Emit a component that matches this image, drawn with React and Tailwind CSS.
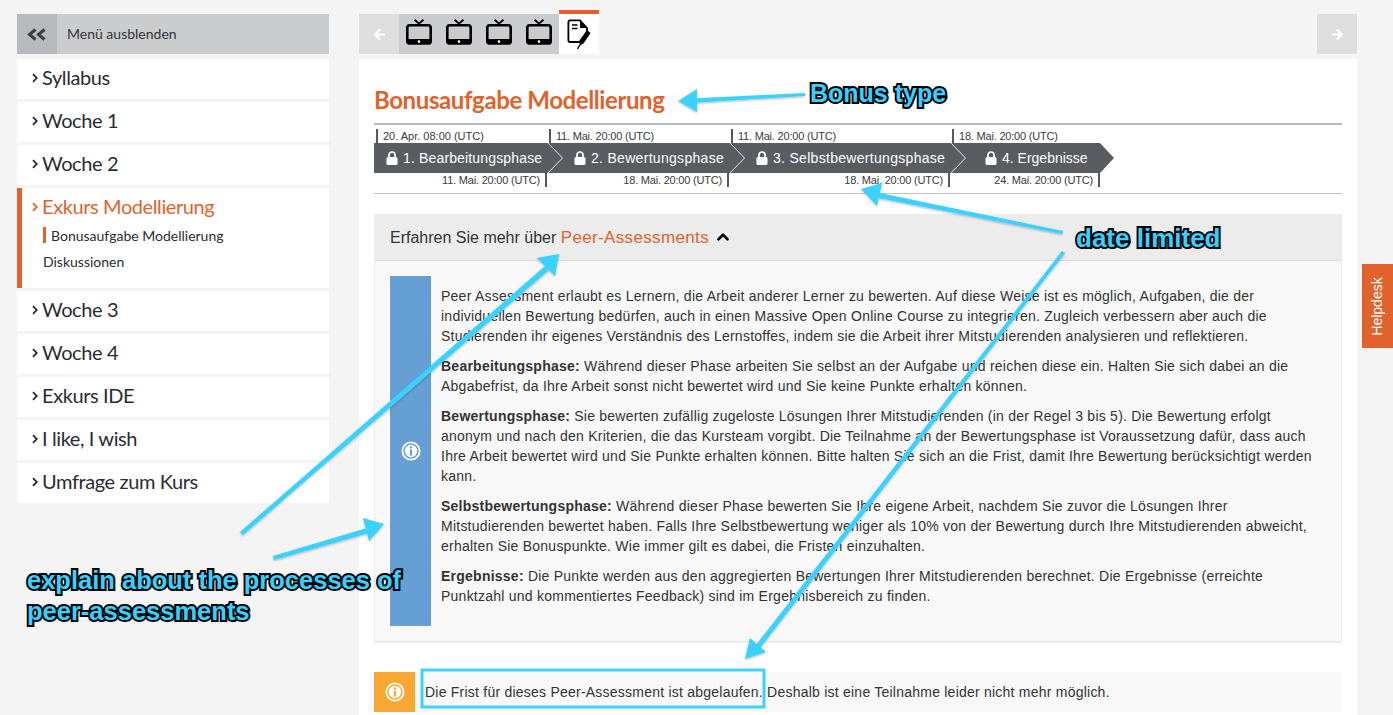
import React from "react";
import { ArrowLeft, ArrowRight, ChevronUp } from "lucide-react";

const SANS = "font-['Liberation_Sans',Arial,sans-serif]";
const KLAV = "font-['Lato','Noto_Sans',sans-serif]";

function Chev({ className = "" }) {
  return (
    <svg width="6" height="10" viewBox="0 0 6 10" className={className} fill="none" stroke="currentColor" strokeWidth="1.8">
      <path d="M1 1.2 L4.8 5 L1 8.8" />
    </svg>
  );
}

function NavItem({ label }) {
  return (
    <div className={`h-10 bg-white flex items-center pl-[15px] pb-[4px] text-[#2b2b33] ${KLAV}`}>
      <Chev className="mr-[4px] mt-[2px]" />
      <span className="text-[20px] tracking-[-0.4px]">{label}</span>
    </div>
  );
}

function Tv() {
  return (
    <div className="w-10 h-10 flex items-center justify-center">
      <svg width="26" height="26" viewBox="0 0 26 26" fill="none" className="-mt-[4px]">
        <path d="M8.5 0.7 L13 4.6 L17.5 0.7" stroke="#000" strokeWidth="1.8" />
        <rect x="1.3" y="6.3" width="23.4" height="18" rx="2.5" fill="#cbcccd" stroke="#000" strokeWidth="2.6" />
        <rect x="0.5" y="20" width="25" height="5.5" rx="1.8" fill="#000" />
        <circle cx="13" cy="22.6" r="1.3" fill="#fff" />
      </svg>
    </div>
  );
}

function NoteIcon() {
  return (
    <svg width="24" height="32" viewBox="0 0 24 32" fill="none">
      <path d="M13 23 H3 a1.6 1.6 0 0 1 -1.6 -1.6 V3 a1.6 1.6 0 0 1 1.6 -1.6 H13 L20 9 V12" stroke="#000" strokeWidth="1.8" />
      <path d="M13 1.5 L20 9 H13 Z" fill="#000" />
      <path d="M5 6 H10.5 M5 9.5 H10.5" stroke="#000" strokeWidth="1.3" />
      <path d="M20 11 L23.6 14 L16.5 24.5 L12.5 26.5 L12.5 21.5 Z" fill="#000" />
      <path d="M12.8 26 L10.5 30" stroke="#000" strokeWidth="1.4" />
    </svg>
  );
}

function Lock() {
  return (
    <svg width="12" height="14" viewBox="0 0 12 14" className="shrink-0">
      <path d="M3 6.5 V4 a3 3 0 0 1 6 0 V6.5" fill="none" stroke="#fff" strokeWidth="1.7" />
      <rect x="0.5" y="6" width="11" height="8" rx="1.5" fill="#fff" />
    </svg>
  );
}

function InfoIcon({ color }) {
  return (
    <svg width="20" height="20" viewBox="0 0 20 20" fill="none">
      <circle cx="10" cy="10" r="8.6" stroke="#fff" strokeWidth="1.8" />
      <circle cx="10" cy="10" r="6.2" fill="#fff" />
      <circle cx="10" cy="6.4" r="1.2" fill={color} />
      <rect x="8.9" y="8.6" width="2.2" height="6" fill={color} />
    </svg>
  );
}

const steps = [
  { w: "w-[175px]", t: "20. Apr. 08:00 (UTC)", b: "11. Mai. 20:00 (UTC)", n: "1. Bearbeitungsphase", pl: "pl-[12px] tracking-[0.15px]", top: "ml-[2px]", bot: "mr-[2px] pr-[5px]" },
  { w: "w-[182px]", t: "11. Mai. 20:00 (UTC)", b: "18. Mai. 20:00 (UTC)", n: "2. Bewertungsphase", pl: "pl-[25px] tracking-[0.3px]", top: "tracking-[-0.2px]", bot: "mr-[2px] pr-[5px]" },
  { w: "w-[221px]", t: "11. Mai. 20:00 (UTC)", b: "18. Mai. 20:00 (UTC)", n: "3. Selbstbewertungsphase", pl: "pl-[25px] tracking-[0.3px]", top: "tracking-[-0.2px]", bot: "mr-[2px] pr-[5px]" },
  { w: "w-[148px]", t: "18. Mai. 20:00 (UTC)", b: "24. Mai. 20:00 (UTC)", n: "4. Ergebnisse", pl: "pl-[33px] tracking-[0px]", top: "tracking-[-0.2px]", bot: "pr-[5px]", last: true },
];

function Step({ s }) {
  return (
    <div className={`${s.w} flex flex-col shrink-0`}>
      <div className={`h-[14px] ${s.top} border-l-2 border-[#55595e] pl-[5px] text-[11px] leading-[15px] text-[#3a3a3a] whitespace-nowrap`}>{s.t}</div>
      <div className={`relative h-[30px] bg-[#595d62] flex items-center gap-[5px] ${s.pl} text-white text-[14px] whitespace-nowrap`}>
        <Lock />
        <span>{s.n}</span>
        {s.last ? (
          <svg width="14" height="30" viewBox="0 0 14 30" className="absolute left-full top-0">
            <path d="M0 0 L14 15 L0 30 Z" fill="#595d62" />
          </svg>
        ) : (
          <svg width="16" height="30" viewBox="0 0 16 30" className="absolute left-full top-0 -ml-px z-10" fill="none">
            <path d="M0 0 L14.5 15 L0 30" stroke="#e8e8e8" strokeWidth="1" />
          </svg>
        )}
      </div>
      <div className={`h-[14px] ${s.bot} border-r-2 border-[#55595e] text-right text-[11px] tracking-[-0.2px] leading-[15px] text-[#3a3a3a] whitespace-nowrap`}>{s.b}</div>
    </div>
  );
}

const labelCls = `absolute ${SANS} font-bold text-[#37d0ff] [-webkit-text-stroke:4px_#000] [paint-order:stroke_fill] whitespace-nowrap`;

export default function App() {
  return (
    <div className={`relative w-[1393px] h-[715px] overflow-hidden bg-[#f4f4f4] flex ${SANS}`}>
      {/* sidebar */}
      <aside className="w-[312px] ml-[17px] mt-[14px] flex flex-col gap-[3px] shrink-0">
        <div className={`h-10 mb-[2px] bg-[#cbcccd] flex items-center text-[#33343a] ${KLAV}`}>
          <div className="w-10 h-10 bg-[#b8b9bc] flex items-center justify-center">
            <svg width="20" height="13" viewBox="0 0 20 13" fill="none" stroke="#3c3d42" strokeWidth="3">
              <path d="M8.5 1.5 L2.5 6.5 L8.5 11.5 M17.5 1.5 L11.5 6.5 L17.5 11.5" />
            </svg>
          </div>
          <span className="ml-[10px] text-[14px] pb-[2px]">Menü ausblenden</span>
        </div>
        <NavItem label="Syllabus" />
        <NavItem label="Woche 1" />
        <NavItem label="Woche 2" />
        <div className={`h-[100px] bg-white border-l-[5px] border-[#e0632d] pl-[10px] flex flex-col ${KLAV}`}>
          <div className="h-[39px] pb-[4px] flex items-center text-[#e0632d]">
            <Chev className="mr-[4px] mt-[2px]" />
            <span className="text-[20px] tracking-[-0.4px]">Exkurs Modellierung</span>
          </div>
          <div className="flex items-center h-[16px] text-[14px] text-[#2b2b33]">
            <span className="w-[3px] h-[16px] bg-[#e0632d] ml-[11px] mr-[5px]"></span>
            Bonusaufgabe Modellierung
          </div>
          <div className="mt-[11px] ml-[11px] text-[14px] leading-[16px] text-[#2b2b33]">Diskussionen</div>
        </div>
        <NavItem label="Woche 3" />
        <NavItem label="Woche 4" />
        <NavItem label="Exkurs IDE" />
        <NavItem label="I like, I wish" />
        <NavItem label="Umfrage zum Kurs" />
      </aside>

      {/* main */}
      <main className="w-[998px] ml-[30px] shrink-0 flex flex-col">
        <div className="h-[54px] flex items-end justify-between">
          <div className="flex items-end">
            <div className="w-10 h-10 bg-[#dedede] flex items-center justify-center">
              <ArrowLeft size={15} color="#fff" strokeWidth={3.5} />
            </div>
            <div className="flex bg-[#cbcccd]">
              <Tv /><Tv /><Tv /><Tv />
            </div>
            <div className="w-10 h-11 bg-white border-t-4 border-[#e0632d] flex items-start justify-center pt-[5px]">
              <NoteIcon />
            </div>
          </div>
          <div className="w-10 h-10 bg-[#dedede] flex items-center justify-center">
            <ArrowRight size={15} color="#fff" strokeWidth={3.5} />
          </div>
        </div>

        <div className="mt-[5px] flex-1 bg-white px-[15px] pt-[25px]">
          <h1 className={`text-[24px] leading-[32px] font-bold text-[#e0632d] tracking-[-0.4px] ${KLAV}`}>Bonusaufgabe Modellierung</h1>

          <div className="mt-[7px] border-t-2 border-b border-t-[#b9b9bd] border-b-[#c4c4c6] pt-[4px] pb-[5px] h-[71px] flex">
            {steps.map((s) => <Step key={s.n} s={s} />)}
          </div>

          <section className="mt-[20px] border-x border-b-2 border-[#ececec] bg-[#f8f8f8]">
            <div className="h-[47px] -mx-px bg-[#ececec] border-b border-[#dedede] flex items-center px-4 pt-[2px] text-[16px] text-[#333]">
              <span>Erfahren Sie mehr über&nbsp;</span>
              <span className="text-[#e0632d] text-[17px] tracking-[0.35px]">Peer-Assessments</span>
              <ChevronUp size={18} strokeWidth={3.5} color="#000" className="ml-[5px] -mt-[2px]" />
            </div>
            <div className="flex pl-[15px] pr-[10px] pt-[15px] pb-[15px]">
              <div className="w-[41px] h-[350px] bg-[#669fd3] flex items-center justify-center shrink-0">
                <InfoIcon color="#669fd3" />
              </div>
              <div className="ml-[10px] pt-[10px] text-[14px] tracking-[0.24px] leading-[20px] text-[#333] whitespace-nowrap flex flex-col gap-[10px]">
                <p>Peer Assessment erlaubt es Lernern, die Arbeit anderer Lerner zu bewerten. Auf diese Weise ist es möglich, Aufgaben, die der<br />individuellen Bewertung bedürfen, auch in einen Massive Open Online Course zu integrieren. Zugleich verbessern aber auch die<br />Studierenden ihr eigenes Verständnis des Lernstoffes, indem sie die Arbeit ihrer Mitstudierenden analysieren und reflektieren.</p>
                <p><b>Bearbeitungsphase:</b> Während dieser Phase arbeiten Sie selbst an der Aufgabe und reichen diese ein. Halten Sie sich dabei an die<br />Abgabefrist, da Ihre Arbeit sonst nicht bewertet wird und Sie keine Punkte erhalten können.</p>
                <p><b>Bewertungsphase:</b> Sie bewerten zufällig zugeloste Lösungen Ihrer Mitstudierenden (in der Regel 3 bis 5). Die Bewertung erfolgt<br />anonym und nach den Kriterien, die das Kursteam vorgibt. Die Teilnahme an der Bewertungsphase ist Voraussetzung dafür, dass auch<br />Ihre Arbeit bewertet wird und Sie Punkte erhalten können. Bitte halten Sie sich an die Frist, damit Ihre Bewertung berücksichtigt werden<br />kann.</p>
                <p><b>Selbstbewertungsphase:</b> Während dieser Phase bewerten Sie Ihre eigene Arbeit, nachdem Sie zuvor die Lösungen Ihrer<br />Mitstudierenden bewertet haben. Falls Ihre Selbstbewertung weniger als 10% von der Bewertung durch Ihre Mitstudierenden abweicht,<br />erhalten Sie Bonuspunkte. Wie immer gilt es dabei, die Fristen einzuhalten.</p>
                <p><b>Ergebnisse:</b> Die Punkte werden aus den aggregierten Bewertungen Ihrer Mitstudierenden berechnet. Die Ergebnisse (erreichte<br />Punktzahl und kommentiertes Feedback) sind im Ergebnisbereich zu finden.</p>
              </div>
            </div>
          </section>

          <div className="mt-[29px] h-10 bg-[#f8f8f8] flex items-center text-[14px] tracking-[0.23px] text-[#333]">
            <div className="w-[41px] h-10 bg-[#f8a832] flex items-center justify-center mr-[10px]">
              <InfoIcon color="#f8a832" />
            </div>
            Die Frist für dieses Peer-Assessment ist abgelaufen. Deshalb ist eine Teilnahme leider nicht mehr möglich.
          </div>
        </div>
      </main>

      {/* helpdesk tab */}
      <div className="absolute left-[1362px] top-[264px] w-[31px] h-[84px] bg-[#e0632d] flex items-center justify-center">
        <span className="-rotate-90 text-white text-[14px] whitespace-nowrap">Helpdesk</span>
      </div>

      {/* annotation overlay */}
      <svg width="1393" height="715" className="absolute inset-0 pointer-events-none" fill="#3ad2ff" stroke="none">
        <defs>
          <filter id="s" x="-10%" y="-10%" width="120%" height="120%">
            <feDropShadow dx="0" dy="1" stdDeviation="1" floodColor="#000" floodOpacity="0.3" />
          </filter>
        </defs>
        <g filter="url(#s)">
          <path d="M692 98.5 L805 93 L805 96 L692 103 Z" />
          <path d="M678 101 L697 89 L697 112 Z" />
          <path d="M875 192 L1063 231 L1062 234 L873 197 Z" />
          <path d="M861 189 L882 183 L877 206 Z" />
          <path d="M756 645 L1062 251 L1065 253 L760 648 Z" />
          <path d="M745 659 L750 638 L766 652 Z" />
          <path d="M545 266 L240 532 L243 535 L549 270 Z" />
          <path d="M559 254 L537 258 L555 276 Z" />
          <path d="M367 528 L273 556 L274 560 L369 533 Z" />
          <path d="M384 524 L363 518 L369 541 Z" />
        </g>
        <rect x="422" y="670" width="342" height="37" fill="none" stroke="#3ad2ff" strokeWidth="3" />
      </svg>
      <div className={`${labelCls} left-[810px] top-[79px] text-[25px] leading-[28px]`}>Bonus type</div>
      <div className={`${labelCls} left-[1076px] top-[224px] text-[26px] leading-[28px]`}>date limited</div>
      <div className={`${labelCls} left-[27px] top-[565px] text-[25.5px] leading-[31px]`}>explain about the processes of<br />peer-assessments</div>
    </div>
  );
}
